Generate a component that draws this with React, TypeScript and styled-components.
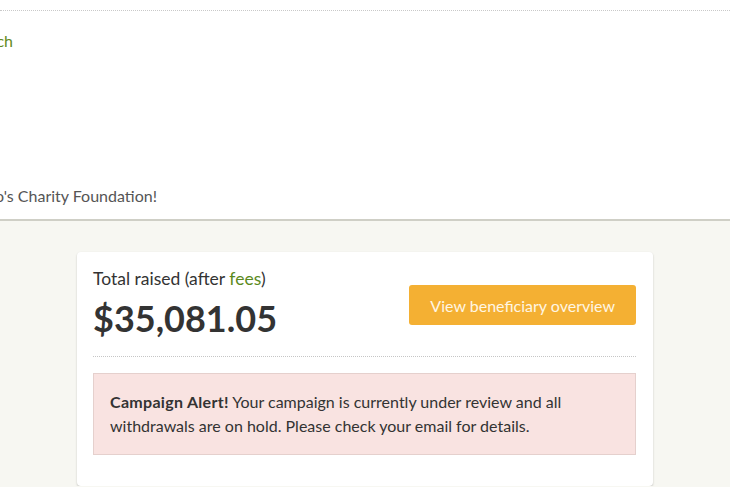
import React from "react";
import styled, { createGlobalStyle } from "styled-components";

const Global = createGlobalStyle`
  html, body { margin: 0; padding: 0; }
  body {
    font-family: Lato, "Open Sans", sans-serif;
    background: #f7f7f2;
    overflow: hidden;
    color: #333;
  }
`;

const Header = styled.header`
  background: #fff;
  height: 209px;
  border-bottom: 2px solid #cfcfc6;
  box-sizing: content-box;
  display: flex;
  flex-direction: column;
  padding-top: 10px;
`;

const DottedRule = styled.div`
  border-top: 1px dotted #c9c9c9;
`;

const Clip = styled.div<{ $end: number; $top: number; $size: number; $color: string }>`
  width: 400px;
  margin-left: ${(p) => p.$end - 400}px;
  margin-top: ${(p) => p.$top}px;
  text-align: right;
  white-space: nowrap;
  font-size: ${(p) => p.$size}px;
  line-height: 20px;
  color: ${(p) => p.$color};
`;

const Main = styled.main`
  display: flex;
  justify-content: center;
  padding-top: 31px;
`;

const Card = styled.section`
  width: 576px;
  box-sizing: border-box;
  background: #fff;
  border-radius: 4px;
  box-shadow: 0 1px 2px rgba(0, 0, 0, 0.22);
  padding: 16px 17px 31px 16px;
`;

const Top = styled.div`
  display: flex;
  align-items: center;
  justify-content: space-between;
  padding-bottom: 16px;
  border-bottom: 1px dotted #c6c6c6;
`;

const Label = styled.div`
  font-size: 17.5px;
  line-height: 22px;
  color: #333;
`;

const Green = styled.span`
  color: #5b8a1d;
`;

const Amount = styled.div`
  font-size: 36px;
  font-weight: 700;
  line-height: 44px;
  color: #333;
  margin-top: 6px;
`;

const Button = styled.button`
  font-family: Lato, sans-serif;
  font-size: 16px;
  background: #f4b033;
  color: #fff6e3;
  border: none;
  border-radius: 3px;
  height: 40px;
  padding: 0 21px;
  margin-top: 2px;
  cursor: pointer;
`;

const Alert = styled.div`
  margin-top: 16px;
  background: #f9e3e1;
  border: 1px solid #e5d0cd;
  padding: 16px 16px 16px;
  font-size: 16px;
  line-height: 24px;
  color: #333;
`;

const Strong = styled.strong`
  font-weight: 700;
  letter-spacing: 0.3px;
`;

export default function App() {
  return (
    <>
      <Global />
      <Header>
        <DottedRule />
        <Clip $end={13} $top={20} $size={16} $color="#628a22">
          Back to search
        </Clip>
        <Clip $end={157} $top={135} $size={16} $color="#555">
          Thank you for supporting Mario's Charity Foundation!
        </Clip>
      </Header>
      <Main>
        <Card>
          <Top>
            <div>
              <Label>
                Total raised (after <Green>fees</Green>)
              </Label>
              <Amount>$35,081.05</Amount>
            </div>
            <Button>View beneficiary overview</Button>
          </Top>
          <Alert>
            <Strong>Campaign Alert!</Strong> Your campaign is currently under review and all
            withdrawals are on hold. Please check your email for details.
          </Alert>
        </Card>
      </Main>
    </>
  );
}
